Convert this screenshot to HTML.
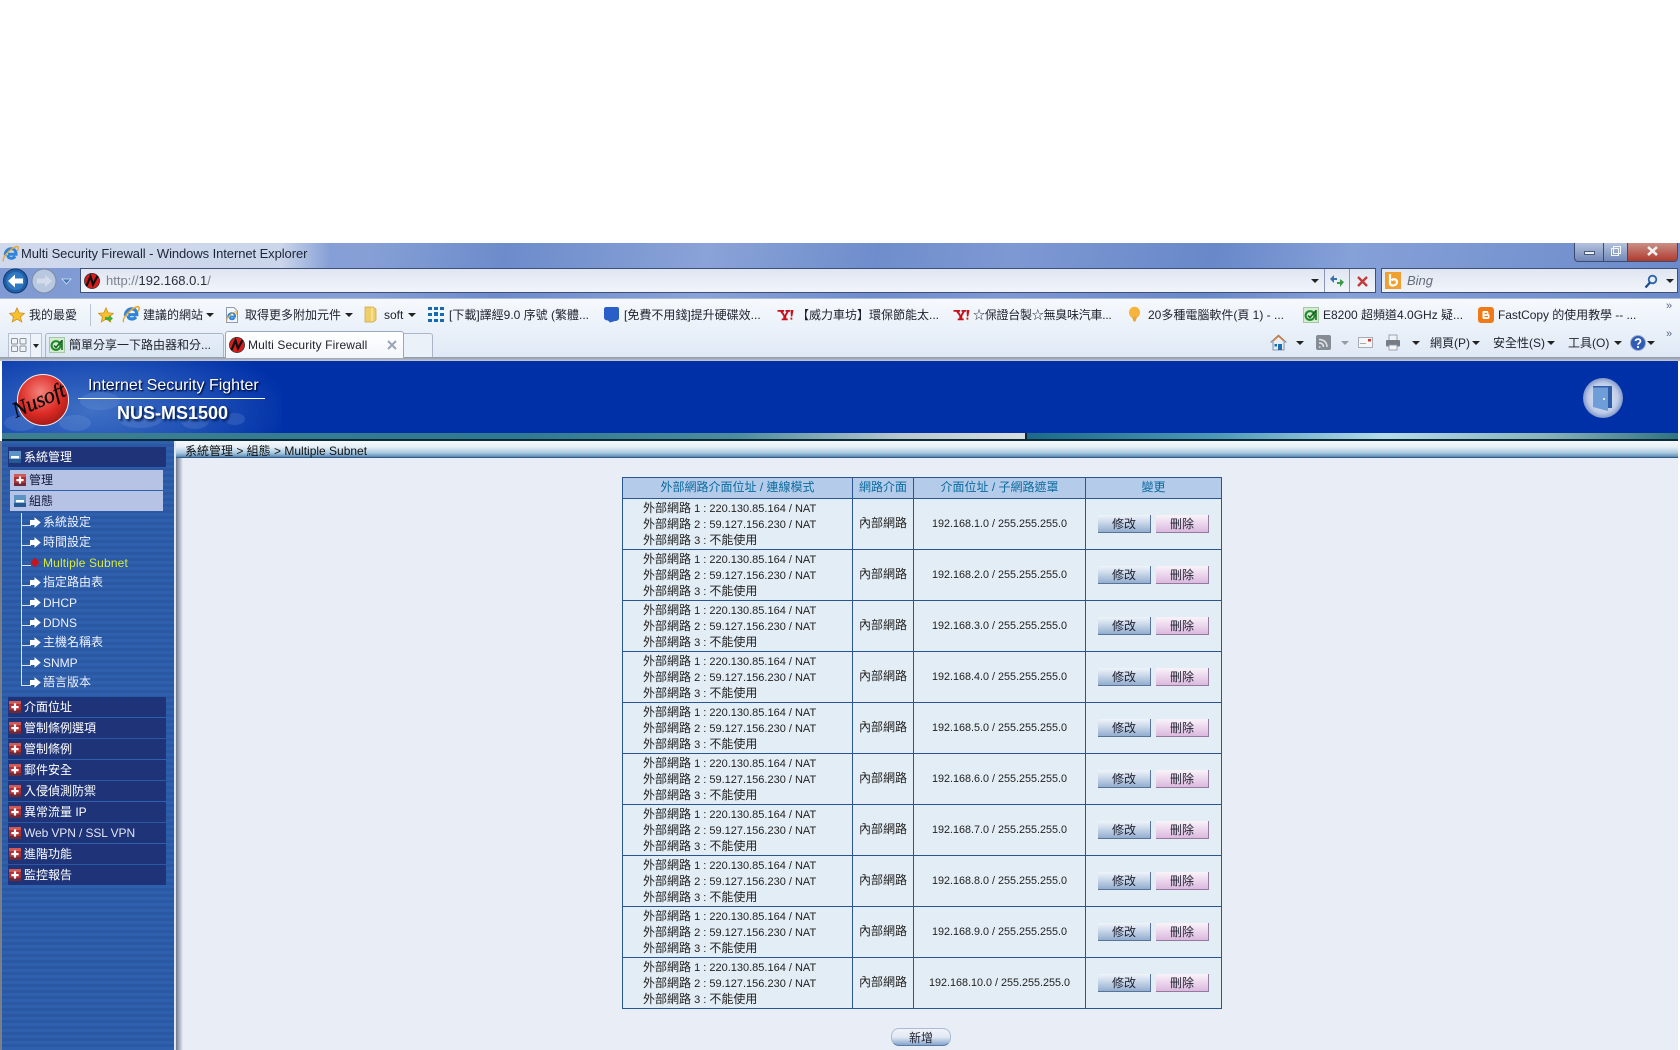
<!DOCTYPE html>
<html lang="zh-Hant">
<head>
<meta charset="utf-8">
<title>Multi Security Firewall</title>
<style>
html,body{margin:0;padding:0;background:#fff;width:1680px;height:1050px;overflow:hidden}
body{position:relative;font-family:"Liberation Sans","WenQuanYi Zen Hei","Noto Sans CJK TC",sans-serif;font-size:12px;color:#111}
.b{position:absolute}
.t{position:absolute;white-space:nowrap;line-height:16px}
.tb{font-family:"Liberation Sans","Noto Sans CJK TC",sans-serif;font-size:12px;color:#20242c}
.a{position:absolute;width:0;height:0;border-left:4px solid transparent;border-right:4px solid transparent;border-top:4px solid #222}
svg{position:absolute;overflow:visible}
.m{position:absolute;left:8px;width:158px;height:20px;background:#1f3478;color:#fff;line-height:20px;padding:0;text-indent:16px;white-space:nowrap}
.s{position:absolute;left:10px;width:153px;height:20px;background:#b6c3e4;color:#10163a}
.tree{position:absolute;left:43px;color:#eef2ff;line-height:16px;white-space:nowrap}
.h{position:absolute;left:21px;width:10px;height:1px;background:#dde4f5}
table{position:absolute;left:622px;top:477px;width:599px;border-collapse:collapse;table-layout:fixed;background:#e3edf5;color:#222}
td,th{border:1px solid #2a5590;padding:0;text-align:center;font-weight:normal;line-height:15.8px}
th{height:20px;background:#b4cbe9;color:#0a6aa0;vertical-align:middle}
td{height:50px;overflow:hidden}
td.l{text-align:left;padding-left:20px;font-size:11px;padding-top:2px;height:48px;vertical-align:top}
td.l p{margin:0;height:16px;line-height:16px;overflow:hidden;white-space:nowrap}
td.l i{font-size:12px;font-style:normal;line-height:12px}
td.n{font-size:10.8px;padding-top:2px;height:48px}
.bt{display:inline-block;position:relative;top:0;width:53px;height:18px;line-height:18px;color:#223;vertical-align:middle;font-size:12px;box-sizing:border-box;border-right:1px solid #5a7398;border-bottom:1px solid #5a7398;background:linear-gradient(#f0f4f9 0,#d2deec 35%,#94aed0 100%)}
.bt.d{margin-left:5px;border-color:#957aa0;background:linear-gradient(#f9f4f9 0,#eedcef 40%,#dbb9de 100%)}
</style>
</head>
<body>
<svg width="0" height="0" style="position:absolute">
<defs>
<symbol id="nu" viewBox="0 0 16 16"><circle cx="8" cy="8" r="7.6" fill="#d81c1c"/><circle cx="8" cy="8" r="7.6" fill="none" stroke="#333" stroke-width=".7"/><path d="M2.5 13 L6.5 3.5 L9 11.5 L13.5 3" fill="none" stroke="#111" stroke-width="2.2"/></symbol>
<symbol id="ie" viewBox="0 0 16 16"><path d="M3 9.2 C3 5 6 3 8.7 3 C11.7 3 13.2 5.2 13.2 8.2 L5.6 8.2 M5.5 9 C5.5 12.4 9.8 13 12.5 10.3" fill="none" stroke="#2f83d8" stroke-width="2.8"/><path d="M1.5 14.8 C-.5 11.5 8 2.5 13.8 1 C16 .8 15.6 3.5 14 5.5" fill="none" stroke="#e8a82a" stroke-width="1.3"/></symbol>
<symbol id="star" viewBox="0 0 16 16"><path d="M8 .8 L10.2 5.8 L15.5 6.3 L11.5 9.8 L12.8 15 L8 12.2 L3.2 15 L4.5 9.8 L.5 6.3 L5.8 5.8Z" fill="#f7c02f" stroke="#c98a1a" stroke-width=".7"/></symbol>
<symbol id="ok" viewBox="0 0 16 16"><rect x=".5" y=".5" width="15" height="15" fill="#d5ead2" stroke="#a6c8a2"/><circle cx="7" cy="8.5" r="4.4" fill="none" stroke="#1f8a2a" stroke-width="2"/><path d="M5 8.5 L7 10.5 L13 3.5 M13 3 L13 13" fill="none" stroke="#17601f" stroke-width="1.5"/></symbol>
<symbol id="y" viewBox="0 0 16 12"><path d="M0 1 H6.5 V2.8 H5.4 L7.2 6 L9 2.8 H8 V1 H12.5 V2.8 H11.2 L8.8 7 V9.5 H10.2 V11.2 H4.2 V9.5 H5.8 V7 L2.8 2.8 H0Z" fill="#c5121a"/><path d="M13 1 H16 L14.8 7.5 H13.4Z M13 8.6 H14.8 V10.6 H13Z" fill="#c5121a"/></symbol>
<symbol id="plus" viewBox="0 0 12 12"><rect width="12" height="12" fill="#b23034"/><rect x="0" y="0" width="12" height="3" fill="#cf5a55"/><rect x="0" y="9" width="12" height="3" fill="#6e2a36"/><rect x="2.4" y="5" width="7.2" height="2.2" fill="#fff"/><rect x="4.9" y="2.4" width="2.2" height="7.2" fill="#fff"/></symbol>
<symbol id="minus" viewBox="0 0 12 12"><rect width="12" height="12" fill="#5c93c4"/><rect x="0" y="8" width="12" height="4" fill="#255a94"/><rect x="2" y="5" width="8" height="2.4" fill="#fff"/></symbol>
<symbol id="arr" viewBox="0 0 11 11"><path d="M0 3 H4.5 V.2 L10.8 5.5 L4.5 10.8 V8 H0Z" fill="#fff"/></symbol>
</defs>
</svg>

<!-- browser chrome: title and address -->
<div class="b" style="left:0;top:243px;width:1680px;height:55px;background:linear-gradient(100deg,#7f9ad4 0,#86a0d6 22%,#6d8bcb 30%,#8aa3d8 42%,#6f8dcc 52%,#7e98d3 60%,#6888c9 72%,#86a0d8 80%,#6b8aca 100%)"></div>
<div class="b" style="left:0;top:243px;width:330px;height:25px;background:linear-gradient(90deg,rgba(222,228,240,.85) 0,rgba(222,228,240,.8) 85%,rgba(222,228,240,0) 100%)"></div>
<svg style="left:2px;top:245px" width="17" height="18"><use href="#ie" width="17" height="18"/></svg>
<div class="t tb" style="left:21px;top:246px;font-size:13px;color:#1d2538;letter-spacing:-.08px">Multi Security Firewall - Windows Internet Explorer</div>

<!-- window controls -->
<div class="b" style="left:1574px;top:243px;width:104px;height:19px;border:1px solid #3c4a6b;border-top:0;border-radius:0 0 4px 4px;box-sizing:border-box;background:linear-gradient(#b4c2de,#7288b8);overflow:hidden">
<div class="b" style="left:28px;top:0;width:1px;height:18px;background:#3c4a6b"></div>
<div class="b" style="left:52px;top:0;width:1px;height:18px;background:#3c4a6b"></div>
<div class="b" style="left:53px;top:0;width:50px;height:18px;background:linear-gradient(#c99087,#b03a2e)"></div>
<div class="b" style="left:9px;top:8px;width:11px;height:4px;background:#eef2f8;border:1px solid #49597c;box-sizing:border-box"></div>
<div class="b" style="left:36px;top:5px;width:8px;height:8px;border:1px solid #f4f7fb;box-sizing:border-box"></div>
<div class="b" style="left:38px;top:3px;width:8px;height:8px;border:1px solid #f4f7fb;box-sizing:border-box"></div>
<svg style="left:72px;top:3px" width="11" height="10"><path d="M1 1 L10 9 M10 1 L1 9" stroke="#f2f2f2" stroke-width="2.6"/></svg>
</div>

<!-- back / forward -->
<svg style="left:3px;top:268px" width="60" height="26">
<circle cx="12.5" cy="13" r="12" fill="#1e5fa8" stroke="#12386b"/><circle cx="12.5" cy="13" r="9" fill="#2f78c2"/>
<path d="M5 13 L12 6.5 V10.5 H20 V15.5 H12 V19.5Z" fill="#fff"/>
<circle cx="41" cy="13" r="12" fill="#b8c8de" stroke="#7a8aa5"/><path d="M49 13 L42 7 V10.5 H34 V15.5 H42 V19Z" fill="#d2dcea"/>
</svg>
<svg style="left:61px;top:278px" width="11" height="7"><path d="M1 1 H10 L5.5 6Z" fill="#3f79b8" stroke="#dce7f5" stroke-width=".7"/></svg>

<!-- address bar -->
<div class="b" style="left:80px;top:268px;width:1296px;height:25px;box-sizing:border-box;border:1px solid #3f5078;background:linear-gradient(#dfe5f1,#f0f3f9 90%)"></div>
<svg style="left:84px;top:273px" width="16" height="16"><use href="#nu" width="16" height="16"/></svg>
<div class="t tb" style="left:106px;top:273px;color:#7d828c;font-size:13px">http://<span style="color:#2a2f3a">192.168.0.1</span>/</div>
<div class="a" style="left:1311px;top:279px"></div>
<div class="b" style="left:1324px;top:269px;width:1px;height:23px;background:#8a97b4"></div>
<div class="b" style="left:1349px;top:269px;width:1px;height:23px;background:#8a97b4"></div>
<svg style="left:1329px;top:274px" width="16" height="14"><path d="M1 5 L5 1 V4 H8 V6 H5 V9Z" fill="#3b6fae"/><path d="M15 8 L11 13 V10 H8 V8 H11 V5Z" fill="#3a9a48"/></svg>
<svg style="left:1356px;top:275px" width="13" height="13"><path d="M2 2 L11 11 M11 2 L2 11" stroke="#c33a36" stroke-width="2.4"/></svg>

<!-- search -->
<div class="b" style="left:1381px;top:268px;width:297px;height:25px;box-sizing:border-box;border:1px solid #3f5078;background:linear-gradient(#dfe5f1,#f0f3f9 90%)"></div>
<div class="b" style="left:1385px;top:272px;width:16px;height:17px;background:#f0a030"></div>
<svg style="left:1388px;top:273px" width="11" height="15"><path d="M2 1 V11 C4 14 9 12 9 9 C9 6 5 5.5 3.5 7.5" fill="none" stroke="#fff" stroke-width="2.2"/></svg>
<div class="t" style="left:1407px;top:273px;font-family:'Liberation Sans',sans-serif;font-style:italic;font-size:13px;color:#666c78">Bing</div>
<svg style="left:1644px;top:274px" width="14" height="15"><circle cx="8.5" cy="5.5" r="3.8" fill="none" stroke="#2a64a8" stroke-width="1.8"/><path d="M6 8.5 L1.5 13.5" stroke="#1c4a86" stroke-width="2.2"/></svg>
<div class="a" style="left:1666px;top:279px"></div>

<!-- toolbars -->
<div class="b" style="left:0;top:298px;width:1680px;height:59px;background:linear-gradient(#f6f9fd 0,#ecf2fa 45%,#dfe9f5 100%);border-top:1px solid #aebbd3;box-sizing:border-box"></div>
<div class="b" style="left:0;top:357px;width:1680px;height:4px;background:linear-gradient(#8f97a6,#c4c9d2)"></div>

<!-- favorites bar -->
<svg style="left:9px;top:307px" width="16" height="16"><use href="#star" width="16" height="16"/></svg>
<div class="t tb" style="left:29px;top:307px">我的最愛</div>
<div class="b" style="left:90px;top:304px;width:1px;height:22px;background:#b9c4d4"></div>
<svg style="left:98px;top:307px" width="16" height="16"><use href="#star" width="16" height="16"/><path d="M7 10 H11 V8 L15 11.5 L11 15 V13 H7Z" fill="#3fae3c"/></svg>
<svg style="left:122px;top:305px" width="18" height="19"><use href="#ie" width="18" height="19"/></svg>
<div class="t tb" style="left:143px;top:307px">建議的網站</div>
<div class="a" style="left:206px;top:313px"></div>
<svg style="left:225px;top:307px" width="14" height="16"><path d="M1.5 .5 H9 L12.5 4 V15.5 H1.5Z" fill="#f4f7fb" stroke="#8f9bb0"/><use href="#ie" x="1" y="4" width="11" height="11"/></svg>
<div class="t tb" style="left:245px;top:307px">取得更多附加元件</div>
<div class="a" style="left:345px;top:313px"></div>
<svg style="left:364px;top:306px" width="13" height="17"><path d="M1 1 H9 L12 3 V14 L9 16 H1Z" fill="#f0cf6a" stroke="#c8a23c" stroke-width=".7"/><path d="M8 1.5 V15.5" stroke="#fff2c0"/></svg>
<div class="t tb" style="left:384px;top:307px">soft</div>
<div class="a" style="left:408px;top:313px"></div>
<svg style="left:428px;top:306px" width="16" height="17"><path d="M0 1 H4 V4 H0Z M6 1 H10 V4 H6Z M12 1 H16 V4 H12Z M0 7 H4 V10 H0Z M6 6 H10 V10 H6Z M12 7 H16 V10 H12Z M0 13 H4 V16 H0Z M6 13 H10 V16 H6Z M12 13 H16 V16 H12Z" fill="#1769b0"/></svg>
<div class="t tb" style="left:449px;top:307px">[下載]譯經9.0 序號 (繁體...</div>
<svg style="left:603px;top:306px" width="16" height="17"><path d="M3 1 H14 C15.5 1 16 2 16 3 V12 C16 14 14 15 12 15 L7 16.5 L5 14.5 C2 14.5 1 13 1 11 V3 C1 2 2 1 3 1Z" fill="#2a5fc8"/></svg>
<div class="t tb" style="left:624px;top:307px">[免費不用錢]提升硬碟效...</div>
<svg style="left:777px;top:309px" width="17" height="12"><use href="#y" width="17" height="12"/></svg>
<div class="t tb" style="left:797px;top:307px">【威力車坊】環保節能太...</div>
<svg style="left:953px;top:309px" width="17" height="12"><use href="#y" width="17" height="12"/></svg>
<div class="t tb" style="left:973px;top:307px;letter-spacing:-.25px">☆保證台製☆無臭味汽車...</div>
<svg style="left:1128px;top:306px" width="13" height="17"><ellipse cx="6.5" cy="6.5" rx="5.5" ry="5.8" fill="#f6b43c"/><path d="M4 11 H9 L7.5 15.5 H5.5Z" fill="#e9a437"/></svg>
<div class="t tb" style="left:1148px;top:307px">20多種電腦軟件(頁 1) - ...</div>
<svg style="left:1303px;top:307px" width="16" height="16"><use href="#ok" width="16" height="16"/></svg>
<div class="t tb" style="left:1323px;top:307px">E8200 超頻道4.0GHz 疑...</div>
<svg style="left:1478px;top:307px" width="16" height="16"><rect width="16" height="16" rx="3" fill="#f07a18"/><path d="M5 4 H9 C10 4 10.5 5 10.5 6.5 V7.5 H11.5 V10.5 C11.5 11.5 10.5 12 9.5 12 H6 C5 12 4.5 11.5 4.5 10.5 V5Z" fill="#fff"/><path d="M6.5 6.5 H9 M6.5 9.5 H10" stroke="#f07a18" stroke-width="1.2"/></svg>
<div class="t tb" style="left:1498px;top:307px;letter-spacing:-.05px">FastCopy 的使用教學 -- ...</div>
<div class="t tb" style="left:1666px;top:298px;color:#5a6a85;font-size:11px">»</div>

<!-- tab row -->
<div class="b" style="left:8px;top:333px;width:34px;height:24px;box-sizing:border-box;border:1px solid #b6c2d3;border-bottom:0;background:#eef3fa"></div>
<div class="b" style="left:30px;top:333px;width:1px;height:24px;background:#b6c2d3"></div>
<svg style="left:11px;top:338px" width="16" height="14"><rect x=".5" y=".5" width="6" height="5.5" rx="1" fill="none" stroke="#8a929e"/><rect x="9" y=".5" width="6" height="5.5" rx="1" fill="none" stroke="#8a929e"/><rect x=".5" y="8" width="6" height="5.5" rx="1" fill="none" stroke="#8a929e"/><rect x="9" y="8" width="6" height="5.5" rx="1" fill="none" stroke="#8a929e"/></svg>
<div class="a" style="left:33px;top:344px;border-left-width:3px;border-right-width:3px"></div>
<div class="b" style="left:45px;top:333px;width:179px;height:24px;box-sizing:border-box;border:1px solid #aab6c8;border-bottom:0;border-radius:3px 3px 0 0;background:linear-gradient(#e6eef8,#dbe6f3)"></div>
<svg style="left:49px;top:337px" width="16" height="16"><use href="#ok" width="16" height="16"/></svg>
<div class="t tb" style="left:69px;top:337px">簡單分享一下路由器和分...</div>
<div class="b" style="left:225px;top:331px;width:179px;height:27px;box-sizing:border-box;border:1px solid #9aa8bd;border-bottom:0;border-radius:3px 3px 0 0;background:linear-gradient(#ffffff,#f2f6fb)"></div>
<svg style="left:229px;top:337px" width="16" height="16"><use href="#nu" width="16" height="16"/></svg>
<div class="t tb" style="left:248px;top:337px;letter-spacing:.12px">Multi Security Firewall</div>
<svg style="left:387px;top:340px" width="10" height="10"><path d="M1 1 L9 9 M9 1 L1 9" stroke="#9aa4b2" stroke-width="2"/></svg>
<div class="b" style="left:404px;top:333px;width:29px;height:24px;box-sizing:border-box;border:1px solid #aab6c8;border-bottom:0;border-left:0;border-radius:0 3px 0 0;background:#ebf1f9"></div>

<!-- command bar -->
<svg style="left:1270px;top:334px" width="17" height="17"><path d="M8.5 1 L16 8 H14 V16 H3 V8 H1Z" fill="#e7eef6" stroke="#6a7d94" stroke-width=".8"/><path d="M3 7 L8.5 2 L14 7" fill="none" stroke="#d97836" stroke-width="1.4"/><rect x="8" y="10" width="4" height="6" fill="#1f6fb0"/><rect x="4.5" y="10" width="2.5" height="2.5" fill="#1f6fb0"/></svg>
<div class="a" style="left:1296px;top:341px"></div>
<svg style="left:1316px;top:335px" width="15" height="15"><rect width="15" height="15" rx="2" fill="#868c94"/><path d="M3 12 h1.5 M3 8 C6 8 7.5 9.5 7.5 12 M3 4.5 C8 4.5 11 7.5 11 12" fill="none" stroke="#e2e6ea" stroke-width="1.5"/></svg>
<div class="a" style="left:1341px;top:341px;border-top-color:#969ba3"></div>
<svg style="left:1358px;top:337px" width="15" height="11"><rect x=".5" y=".5" width="14" height="10" fill="#f5f6f8" stroke="#a9aeb6"/><rect x="10" y="2" width="3" height="2.5" fill="#d33"/><path d="M2 6.5 H8" stroke="#aaa"/></svg>
<svg style="left:1385px;top:334px" width="16" height="17"><rect x="4" y="1" width="8" height="6" fill="#eef1f5" stroke="#8b939e" stroke-width=".8"/><rect x="1" y="6" width="14" height="6.5" rx="1" fill="#767d87"/><rect x="4" y="11" width="8" height="5" fill="#f5f6f8" stroke="#8b939e" stroke-width=".8"/></svg>
<div class="a" style="left:1412px;top:341px"></div>
<div class="t tb" style="left:1430px;top:335px">網頁(P)</div>
<div class="a" style="left:1472px;top:341px"></div>
<div class="t tb" style="left:1493px;top:335px">安全性(S)</div>
<div class="a" style="left:1547px;top:341px"></div>
<div class="t tb" style="left:1568px;top:335px">工具(O)</div>
<div class="a" style="left:1614px;top:341px"></div>
<svg style="left:1630px;top:335px" width="16" height="16"><circle cx="8" cy="8" r="7.5" fill="#2f5bb5" stroke="#9eb0d0"/><path d="M5.5 6 C5.5 3.5 10.5 3.5 10.5 6 C10.5 8 8 8 8 9.8" fill="none" stroke="#fff" stroke-width="1.7"/><circle cx="8" cy="12" r="1.1" fill="#fff"/></svg>
<div class="a" style="left:1647px;top:341px"></div>
<div class="t tb" style="left:1666px;top:326px;color:#5a6a85;font-size:11px">»</div>

<!-- app header -->
<div class="b" style="left:2px;top:361px;width:1676px;height:72px;background:#0030a8"></div>
<div class="b" style="left:2px;top:361px;width:280px;height:72px;background:radial-gradient(ellipse 200px 80px at 90px 50px,#3f70c4 0,#1e4fb5 55%,rgba(0,48,168,0) 100%)"></div>
<svg style="left:0;top:361px" width="280" height="72">
<g fill="#8fb0e4" opacity=".18"><ellipse cx="100" cy="40" rx="20" ry="9"/><ellipse cx="140" cy="58" rx="22" ry="9"/><ellipse cx="195" cy="60" rx="14" ry="8"/><ellipse cx="75" cy="62" rx="16" ry="8"/><ellipse cx="20" cy="62" rx="16" ry="8"/><ellipse cx="235" cy="58" rx="10" ry="6"/></g>
</svg>
<svg style="left:0;top:361px" width="80" height="72">
<defs><radialGradient id="rb" cx=".45" cy=".35" r=".7"><stop offset="0" stop-color="#f4837c"/><stop offset=".6" stop-color="#dd2b25"/><stop offset="1" stop-color="#9c1714"/></radialGradient></defs>
<circle cx="43" cy="39" r="25.5" fill="url(#rb)" stroke="#eee" stroke-width="1"/>
<text x="40" y="46" text-anchor="middle" font-family="Liberation Serif,serif" font-style="italic" font-size="22" fill="#0c0c0c" stroke="#0c0c0c" stroke-width=".3" transform="rotate(-24 40 42)" textLength="56">Nusoft</text>
</svg>
<div class="t" style="left:88px;top:376px;font-size:16px;line-height:20px;color:#fff;text-shadow:1px 1px 1px #00124a,1px 1px 2px #00124a;font-family:'Liberation Sans',sans-serif">Internet Security Fighter</div>
<div class="b" style="left:78px;top:398px;width:187px;height:1px;background:#fff"></div>
<div class="t" style="left:117px;top:403px;font-size:18px;line-height:20px;font-weight:bold;color:#fff;text-shadow:2px 2px 2px #001a50;font-family:'Liberation Sans',sans-serif">NUS-MS1500</div>
<svg style="left:1582px;top:377px" width="42" height="42">
<defs><radialGradient id="dr" cx=".5" cy=".5" r=".5"><stop offset="0" stop-color="#f0f4fb"/><stop offset=".75" stop-color="#bccbe8"/><stop offset="1" stop-color="#8398c8"/></radialGradient></defs>
<circle cx="21" cy="21" r="20" fill="url(#dr)"/>
<path d="M11 9 H30 V31 H26 V10 L26 34 L11 30Z" fill="#6f9dd8"/><path d="M26 9 H30 V31 H26Z M11 9 H30 V10.5 H11Z" fill="#2f5ea8"/><circle cx="22" cy="22" r="1" fill="#fff"/>
</svg>

<!-- strip -->
<div class="b" style="left:2px;top:433px;width:1023px;height:6px;background:linear-gradient(90deg,#3d7f90 0,#2f7a8f 50%,#4d8c9c 72%,#b8c8cd 88%,#d8dfe0 100%)"></div>
<div class="b" style="left:1027px;top:433px;width:651px;height:6px;background:linear-gradient(90deg,#1c6a88 0,#4f9ab8 30%,#b5dbe8 55%,#88b2b8 80%,#2f7280 100%)"></div>
<div class="b" style="left:2px;top:439px;width:1676px;height:2px;background:#0a2a3a"></div>
<div class="b" style="left:1025px;top:433px;width:2px;height:8px;background:#0a2a3a"></div>

<!-- sidebar -->
<div class="b" style="left:0;top:441px;width:2px;height:609px;background:#7a7f88"></div>
<div class="b" style="left:2px;top:441px;width:172px;height:609px;background:repeating-linear-gradient(#2e60ad 0,#2e60ad 3px,#2a58a2 3px,#2a58a2 6px)"></div>
<div class="b" style="left:174px;top:441px;width:2px;height:609px;background:#dfe6f3"></div>
<div class="b" style="left:176px;top:441px;width:7px;height:609px;background:linear-gradient(90deg,#6d7a8c,#e9edf6)"></div>
<!-- content background -->
<div class="b" style="left:183px;top:441px;width:1495px;height:609px;background:#e9edf6"></div>
<div class="b" style="left:176px;top:441px;width:1502px;height:17px;background:linear-gradient(#f5f9fd 0,#e6f0f7 35%,#a9c8de 70%,#5c8fb8 92%,#1d3a6a 100%)"></div>
<div class="t" style="left:185px;top:443px;color:#111;line-height:17px">系統管理 &gt; 組態 &gt; Multiple Subnet</div>

<div class="m" style="top:447px;text-indent:16px">系統管理</div>
<svg style="left:9px;top:451px" width="12" height="12"><use href="#minus" width="12" height="12"/></svg>
<div class="s" style="top:470px"></div><div class="t" style="left:29px;top:471px;color:#10163a;line-height:18px">管理</div>
<svg style="left:14px;top:474px" width="12" height="12"><use href="#plus" width="12" height="12"/></svg>
<div class="s" style="top:491px"></div><div class="t" style="left:29px;top:492px;color:#10163a;line-height:18px">組態</div>
<svg style="left:14px;top:495px" width="12" height="12"><use href="#minus" width="12" height="12"/></svg>

<div class="b" style="left:21px;top:513px;width:1px;height:172px;background:#dde4f5"></div>
<div class="h" style="top:525px"></div><svg style="left:30px;top:517px" width="11" height="11"><use href="#arr" width="11" height="11"/></svg><div class="tree" style="top:514px">系統設定</div>
<div class="h" style="top:545px"></div><svg style="left:30px;top:537px" width="11" height="11"><use href="#arr" width="11" height="11"/></svg><div class="tree" style="top:534px">時間設定</div>
<div class="h" style="top:565px"></div><svg style="left:30px;top:557px" width="10" height="11"><path d="M5 .5 L9.5 5.5 L5 10.5 L.5 5.5Z" fill="#c8141c"/></svg><div class="tree" style="top:555px;color:#d8ea3e;letter-spacing:.15px">Multiple Subnet</div>
<div class="h" style="top:585px"></div><svg style="left:30px;top:577px" width="11" height="11"><use href="#arr" width="11" height="11"/></svg><div class="tree" style="top:574px">指定路由表</div>
<div class="h" style="top:605px"></div><svg style="left:30px;top:597px" width="11" height="11"><use href="#arr" width="11" height="11"/></svg><div class="tree" style="top:595px">DHCP</div>
<div class="h" style="top:625px"></div><svg style="left:30px;top:617px" width="11" height="11"><use href="#arr" width="11" height="11"/></svg><div class="tree" style="top:615px">DDNS</div>
<div class="h" style="top:645px"></div><svg style="left:30px;top:637px" width="11" height="11"><use href="#arr" width="11" height="11"/></svg><div class="tree" style="top:634px">主機名稱表</div>
<div class="h" style="top:665px"></div><svg style="left:30px;top:657px" width="11" height="11"><use href="#arr" width="11" height="11"/></svg><div class="tree" style="top:655px">SNMP</div>
<div class="h" style="top:685px"></div><svg style="left:30px;top:677px" width="11" height="11"><use href="#arr" width="11" height="11"/></svg><div class="tree" style="top:674px">語言版本</div>

<div class="m" style="top:697px">介面位址</div><svg style="left:9px;top:701px" width="12" height="12"><use href="#plus" width="12" height="12"/></svg>
<div class="m" style="top:718px">管制條例選項</div><svg style="left:9px;top:722px" width="12" height="12"><use href="#plus" width="12" height="12"/></svg>
<div class="m" style="top:739px">管制條例</div><svg style="left:9px;top:743px" width="12" height="12"><use href="#plus" width="12" height="12"/></svg>
<div class="m" style="top:760px">郵件安全</div><svg style="left:9px;top:764px" width="12" height="12"><use href="#plus" width="12" height="12"/></svg>
<div class="m" style="top:781px">入侵偵測防禦</div><svg style="left:9px;top:785px" width="12" height="12"><use href="#plus" width="12" height="12"/></svg>
<div class="m" style="top:802px">異常流量 IP</div><svg style="left:9px;top:806px" width="12" height="12"><use href="#plus" width="12" height="12"/></svg>
<div class="m" style="top:823px;letter-spacing:-.1px;color:#dfe4f4">Web VPN / SSL VPN</div><svg style="left:9px;top:827px" width="12" height="12"><use href="#plus" width="12" height="12"/></svg>
<div class="m" style="top:844px">進階功能</div><svg style="left:9px;top:848px" width="12" height="12"><use href="#plus" width="12" height="12"/></svg>
<div class="m" style="top:865px">監控報告</div><svg style="left:9px;top:869px" width="12" height="12"><use href="#plus" width="12" height="12"/></svg>

<!-- table -->
<table>
<colgroup><col style="width:230px"><col style="width:61px"><col style="width:172px"><col style="width:136px"></colgroup>
<tr><th>外部網路介面位址 / 連線模式</th><th>網路介面</th><th>介面位址 / 子網路遮罩</th><th>變更</th></tr>
<tr><td class="l"><p><i>外部網路</i> 1 : 220.130.85.164 / NAT</p><p><i>外部網路</i> 2 : 59.127.156.230 / NAT</p><p><i>外部網路</i> 3 : <i>不能使用</i></p></td><td>內部網路</td><td class="n">192.168.1.0 / 255.255.255.0</td><td><span class="bt">修改</span><span class="bt d">刪除</span></td></tr>
<tr><td class="l"><p><i>外部網路</i> 1 : 220.130.85.164 / NAT</p><p><i>外部網路</i> 2 : 59.127.156.230 / NAT</p><p><i>外部網路</i> 3 : <i>不能使用</i></p></td><td>內部網路</td><td class="n">192.168.2.0 / 255.255.255.0</td><td><span class="bt">修改</span><span class="bt d">刪除</span></td></tr>
<tr><td class="l"><p><i>外部網路</i> 1 : 220.130.85.164 / NAT</p><p><i>外部網路</i> 2 : 59.127.156.230 / NAT</p><p><i>外部網路</i> 3 : <i>不能使用</i></p></td><td>內部網路</td><td class="n">192.168.3.0 / 255.255.255.0</td><td><span class="bt">修改</span><span class="bt d">刪除</span></td></tr>
<tr><td class="l"><p><i>外部網路</i> 1 : 220.130.85.164 / NAT</p><p><i>外部網路</i> 2 : 59.127.156.230 / NAT</p><p><i>外部網路</i> 3 : <i>不能使用</i></p></td><td>內部網路</td><td class="n">192.168.4.0 / 255.255.255.0</td><td><span class="bt">修改</span><span class="bt d">刪除</span></td></tr>
<tr><td class="l"><p><i>外部網路</i> 1 : 220.130.85.164 / NAT</p><p><i>外部網路</i> 2 : 59.127.156.230 / NAT</p><p><i>外部網路</i> 3 : <i>不能使用</i></p></td><td>內部網路</td><td class="n">192.168.5.0 / 255.255.255.0</td><td><span class="bt">修改</span><span class="bt d">刪除</span></td></tr>
<tr><td class="l"><p><i>外部網路</i> 1 : 220.130.85.164 / NAT</p><p><i>外部網路</i> 2 : 59.127.156.230 / NAT</p><p><i>外部網路</i> 3 : <i>不能使用</i></p></td><td>內部網路</td><td class="n">192.168.6.0 / 255.255.255.0</td><td><span class="bt">修改</span><span class="bt d">刪除</span></td></tr>
<tr><td class="l"><p><i>外部網路</i> 1 : 220.130.85.164 / NAT</p><p><i>外部網路</i> 2 : 59.127.156.230 / NAT</p><p><i>外部網路</i> 3 : <i>不能使用</i></p></td><td>內部網路</td><td class="n">192.168.7.0 / 255.255.255.0</td><td><span class="bt">修改</span><span class="bt d">刪除</span></td></tr>
<tr><td class="l"><p><i>外部網路</i> 1 : 220.130.85.164 / NAT</p><p><i>外部網路</i> 2 : 59.127.156.230 / NAT</p><p><i>外部網路</i> 3 : <i>不能使用</i></p></td><td>內部網路</td><td class="n">192.168.8.0 / 255.255.255.0</td><td><span class="bt">修改</span><span class="bt d">刪除</span></td></tr>
<tr><td class="l"><p><i>外部網路</i> 1 : 220.130.85.164 / NAT</p><p><i>外部網路</i> 2 : 59.127.156.230 / NAT</p><p><i>外部網路</i> 3 : <i>不能使用</i></p></td><td>內部網路</td><td class="n">192.168.9.0 / 255.255.255.0</td><td><span class="bt">修改</span><span class="bt d">刪除</span></td></tr>
<tr><td class="l"><p><i>外部網路</i> 1 : 220.130.85.164 / NAT</p><p><i>外部網路</i> 2 : 59.127.156.230 / NAT</p><p><i>外部網路</i> 3 : <i>不能使用</i></p></td><td>內部網路</td><td class="n">192.168.10.0 / 255.255.255.0</td><td><span class="bt">修改</span><span class="bt d">刪除</span></td></tr>
</table>

<!-- add button -->
<div class="b" style="left:891px;top:1028px;width:60px;height:18px;border-radius:8px;line-height:18px;text-align:center;color:#223;background:linear-gradient(#f0f3f9 0,#e2e9f3 50%,#86a6cd 100%);border:1px solid #a9bcd6;border-bottom:1px solid #5a7ba8;box-sizing:border-box">新增</div>
</body>
</html>
